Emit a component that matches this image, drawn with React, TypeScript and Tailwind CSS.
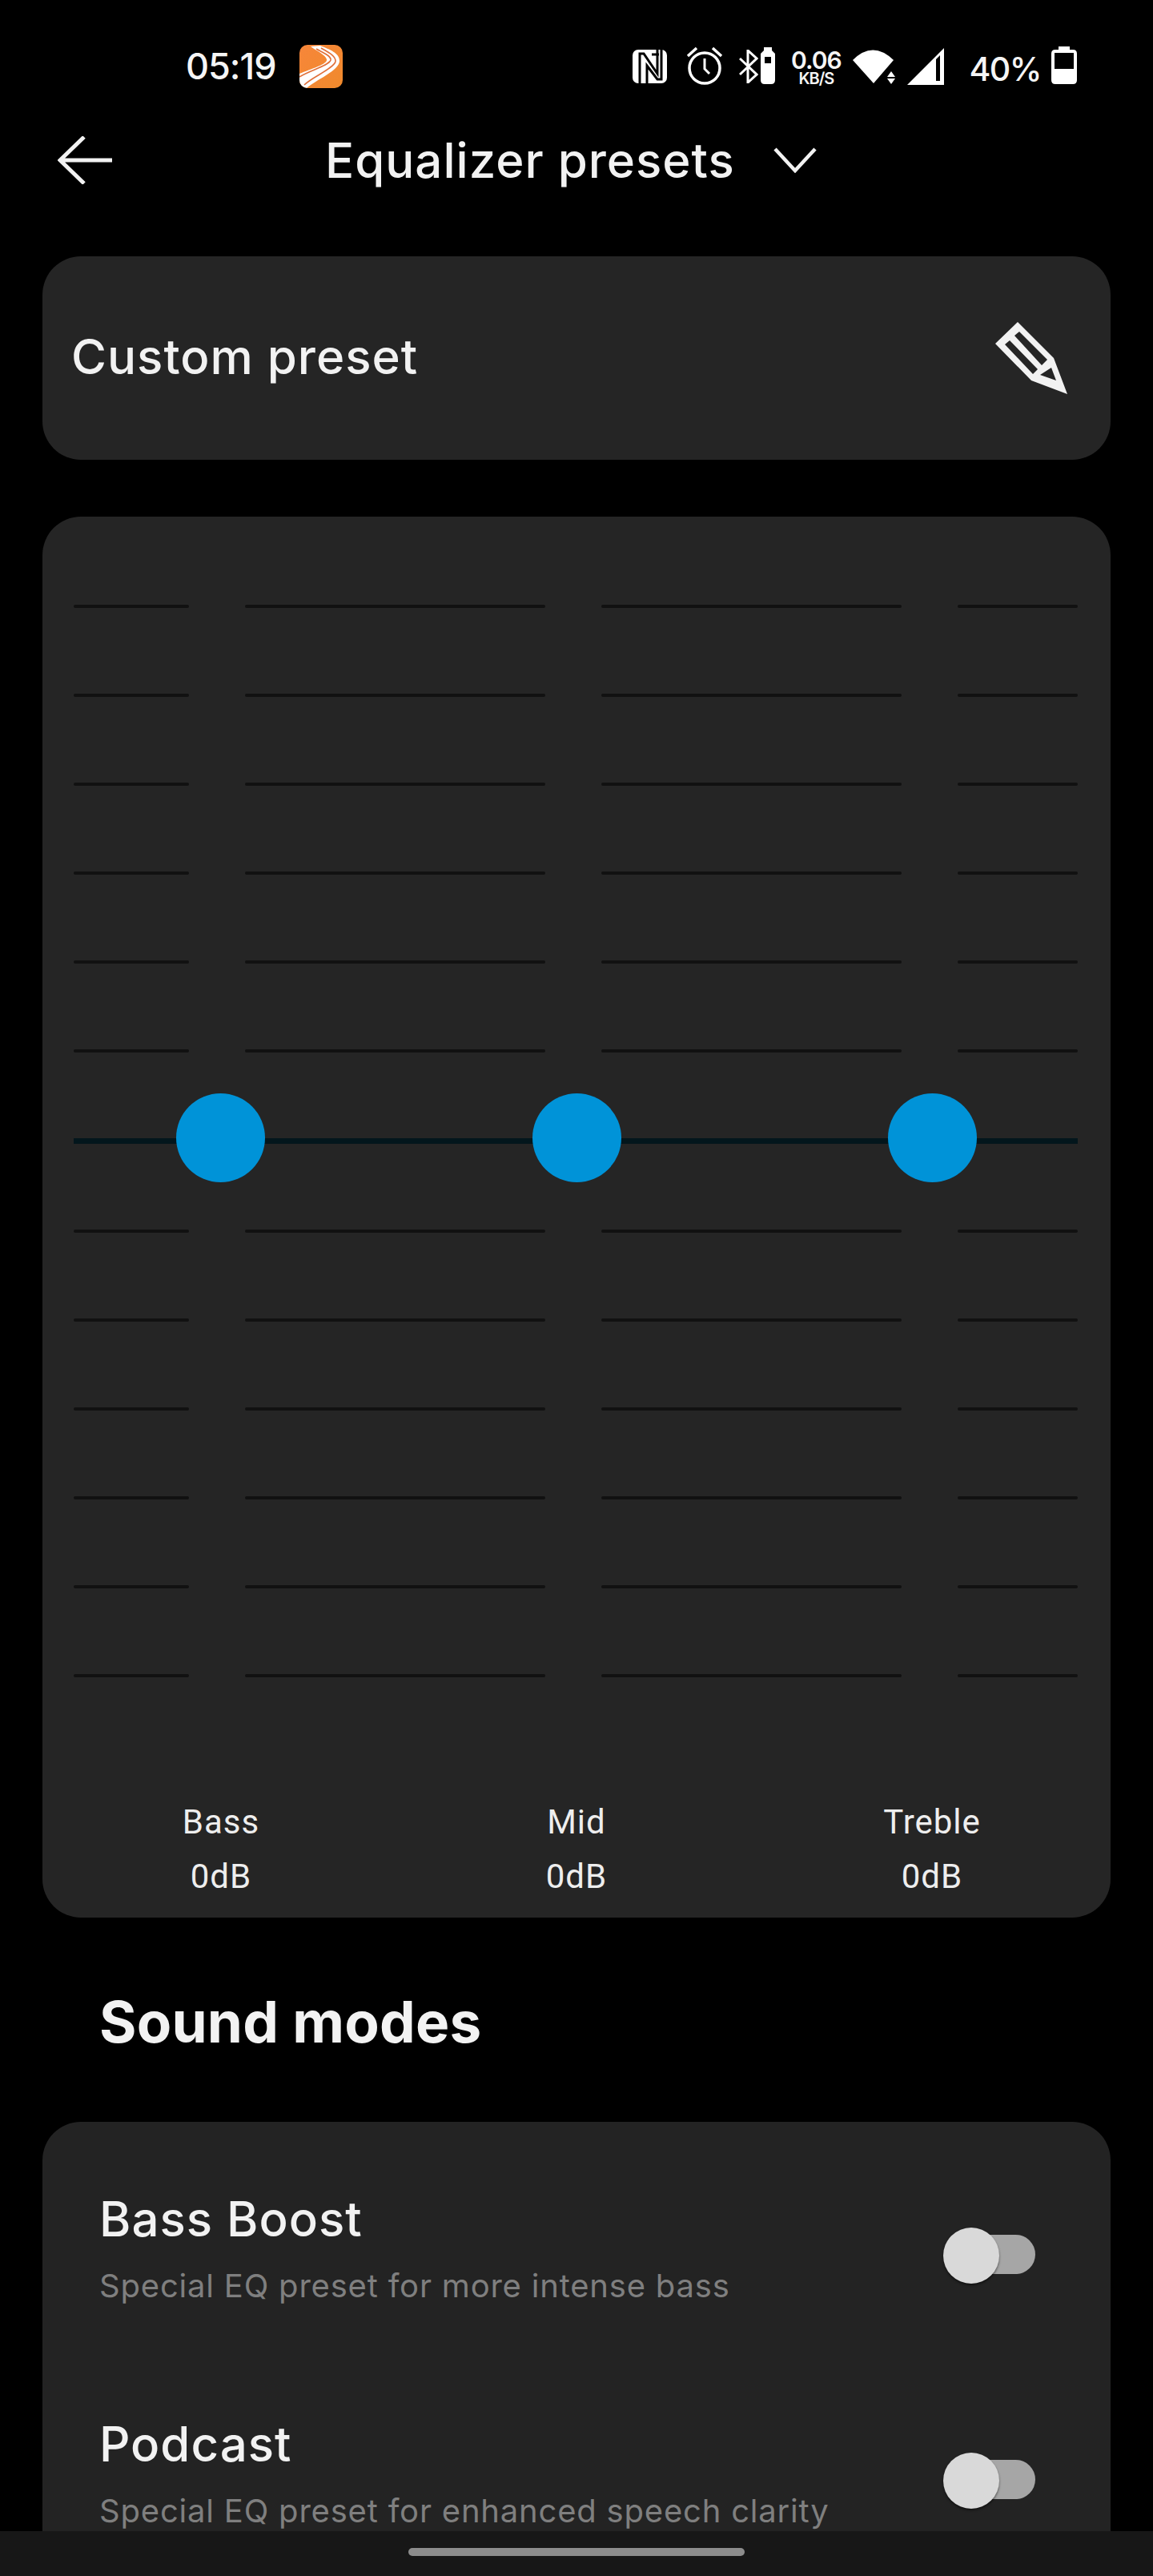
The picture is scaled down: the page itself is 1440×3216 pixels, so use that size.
const rows = Array.from({ length: 13 }, (_, i) => i);
const knobs = ['left-[167px]', 'left-[612px]', 'left-[1056px]'];

function StatusBar() {
  return (
    <div className="flex h-[165px] shrink-0 items-start pl-[232px] pt-[56px] pr-[95px] text-[#f5f5f5]">
      <span className="mt-[4px] text-[45px] leading-[46px] font-medium font-['Inter',sans-serif] tracking-[-1px]">05:19</span>
      <svg className="ml-[29px]" width="54" height="54" viewBox="0 0 54 54">
        <defs>
          <linearGradient id="appBg" x1="0" y1="0" x2="1" y2="1">
            <stop offset="0" stopColor="#f7863a" />
            <stop offset="1" stopColor="#f08a2c" />
          </linearGradient>
          <clipPath id="appClip">
            <rect width="54" height="54" rx="10" />
          </clipPath>
        </defs>
        <g clipPath="url(#appClip)">
          <rect width="54" height="54" fill="url(#appBg)" />
          <path d="M14 2 L26 1 C38 6 50 10 50 20 C50 32 20 44 9 54 L0 54 L0 36 C14 30 36 24 34 18 C32 12 22 8 14 2 Z" fill="#fff" />
          <path d="M21 5 C30 10 40 14 39 19 C37 26 12 32 0 40" fill="none" stroke="#e0703a" strokeWidth="1.6" />
          <path d="M27 4 C36 9 46 14 45 21 C42 30 16 40 6 50" fill="none" stroke="#e0703a" strokeWidth="1.6" />
        </g>
      </svg>
      <div className="ml-auto flex items-start">
        <svg className="mt-[6px]" width="43" height="42" viewBox="0 0 43 42">
          <rect width="43" height="42" rx="7" fill="#fff" />
          <path d="M9 42 V5 H14 L31 30 V0" fill="none" stroke="#000" strokeWidth="3" />
          <path d="M18 42 V20 L31 37 H36 V0" fill="none" stroke="#000" strokeWidth="3" />
          <path d="M24 6 H33" fill="none" stroke="#000" strokeWidth="3" />
        </svg>
        <svg className="ml-[24px]" width="46" height="50" viewBox="0 0 46 50" fill="none" stroke="#fff">
          <circle cx="23" cy="29" r="19" strokeWidth="3.5" />
          <path d="M23 17 V30 L29 36" strokeWidth="3" />
          <path d="M2 14 L13 4 M44 14 L33 4" strokeWidth="3.5" />
        </svg>
        <svg className="ml-[20px] mt-[6px]" width="24" height="42" viewBox="0 0 24 42" fill="none" stroke="#fff" strokeWidth="3">
          <path d="M1 11 L22 31 L11 41 V1 L22 11 L1 31" />
        </svg>
        <svg className="ml-[3px] mt-[3px]" width="18" height="46" viewBox="0 0 18 46">
          <path fillRule="evenodd" d="M4 0 H14 V4 L18 8 V41 Q18 46 13 46 H5 Q0 46 0 41 V8 L4 4 Z M5 12 V20 H13 V12 Z" fill="#fff" />
        </svg>
        <div className="ml-[20px] mt-[5px] flex w-[62px] flex-col items-center font-['Inter',sans-serif] font-semibold">
          <span className="text-[30px] leading-[28px] tracking-[-1px]">0.06</span>
          <span className="mt-[1px] text-[20px] leading-[17px] tracking-[-1px]">KB/S</span>
        </div>
        <svg className="ml-[15px] mt-[6px]" width="54" height="44" viewBox="0 0 54 44" fill="#fff">
          <path d="M0 13 Q25 -12 51 13 L26 42 Z" />
          <path d="M43 34 H53 L48 27 Z" />
          <path d="M43 36 H53 L48 43 Z" />
        </svg>
        <svg className="ml-[14px] mt-[4px]" width="46" height="47" viewBox="0 0 46 47">
          <path fillRule="evenodd" d="M0 46 L46 0 V46 Z M36 14 V41 H41 V9 Z" fill="#fff" />
        </svg>
        <span className="ml-[31px] mt-[8px] text-[41px] leading-[44px] font-medium font-['Inter',sans-serif] tracking-[-1.5px]">40%</span>
        <svg className="ml-[13px] mt-[2px]" width="32" height="47" viewBox="0 0 32 47">
          <path fillRule="evenodd" d="M9 0 H23 V4 H27 Q32 4 32 9 V42 Q32 47 27 47 H5 Q0 47 0 42 V9 Q0 4 5 4 H9 Z M4 8 V28 H28 V8 Z" fill="#fff" />
        </svg>
      </div>
    </div>
  );
}

function Header() {
  return (
    <div className="flex h-[70px] shrink-0 items-center text-[#f2f2f2]">
      <svg className="ml-[72px]" width="68" height="60" viewBox="0 0 68 60" fill="none" stroke="#f2f2f2" strokeWidth="5">
        <path d="M33 1 L3 30 L33 59 M3 30 H68" />
      </svg>
      <span className="ml-[266px] text-[60px] leading-[70px] font-medium font-['Inter',sans-serif] tracking-[1px]">Equalizer presets</span>
      <svg className="ml-[48px]" width="54" height="32" viewBox="0 0 54 32" fill="none" stroke="#f2f2f2" strokeWidth="4.5">
        <path d="M2 2 L27 29 L52 2" />
      </svg>
    </div>
  );
}

function Pencil() {
  return (
    <svg width="90" height="90" viewBox="0 0 90 90">
      <path
        fillRule="evenodd"
        fill="#f2f2f2"
        d="M28 0 L0 27 L45 73 L90 90 L73 45 Z M24 17 L30 12 L65 47 L58 54 Z M12 28 L18 23 L53 59 L47 65 Z M56 66 L70 57 L76 73 Z"
      />
    </svg>
  );
}

function Equalizer() {
  return (
    <div className="relative mt-[71px] h-[1749px] rounded-[48px] bg-[#252525] px-[39px] pt-[110px]">
      <div className="flex h-[1339px] flex-col justify-between">
        {rows.map((i) =>
          i === 6 ? (
            <div key={i} className="h-[7px] w-[1254px] bg-[#03161c]" />
          ) : (
            <div key={i} className="flex h-[4px] gap-[70px]">
              <div className="w-[144px] rounded-full bg-[#111111]" />
              <div className="w-[375px] rounded-full bg-[#111111]" />
              <div className="w-[375px] rounded-full bg-[#111111]" />
              <div className="w-[150px] rounded-full bg-[#111111]" />
            </div>
          ),
        )}
      </div>
      {knobs.map((k) => (
        <div key={k} className={`absolute top-[720px] h-[111px] w-[111px] rounded-full bg-[#0093d8] ${k}`} />
      ))}
      <div className="mt-[147px] flex font-['Roboto',sans-serif] text-[42px] leading-[68px] tracking-[1px] text-[#eeeeee]">
        <div className="ml-[-38px] w-[444px] shrink-0 text-center">
          <p>Bass</p>
          <p>0dB</p>
        </div>
        <div className="w-[444px] shrink-0 text-center">
          <p>Mid</p>
          <p>0dB</p>
        </div>
        <div className="w-[444px] shrink-0 text-center">
          <p>Treble</p>
          <p>0dB</p>
        </div>
      </div>
    </div>
  );
}

function ModeRow({ title, desc }: { title: string; desc: string }) {
  return (
    <div className="flex h-[281px] shrink-0 justify-between pl-[71px] pr-[94px]">
      <div>
        <p className="text-[60px] leading-[70px] font-medium font-['Inter',sans-serif] tracking-[1px] text-[#f2f2f2]">{title}</p>
        <p className="mt-[24px] text-[40px] leading-[50px] font-['Inter',sans-serif] tracking-[0.8px] text-[#7f7f7f]">{desc}</p>
      </div>
      <div className="relative mt-[46px] h-[70px] w-[115px]">
        <div className="absolute right-0 top-[9px] h-[49px] w-[90px] rounded-full bg-[#a6a6a6]" />
        <div className="absolute left-0 top-0 h-[70px] w-[70px] rounded-full bg-[#d9d9d9] shadow-[0_2px_3px_rgba(0,0,0,0.5)]" />
      </div>
    </div>
  );
}

export default function App() {
  return (
    <div className="flex h-[3216px] w-[1440px] flex-col overflow-hidden bg-black">
      <StatusBar />
      <Header />
      <div className="min-h-0 flex-1 overflow-hidden px-[53px]">
        <div className="mt-[85px] flex h-[254px] items-center justify-between rounded-[48px] bg-[#252525] pl-[36px] pr-[54px]">
          <span className="mb-[4px] text-[60px] font-medium font-['Inter',sans-serif] tracking-[1px] text-[#f2f2f2]">Custom preset</span>
          <Pencil />
        </div>
        <Equalizer />
        <h2 className="ml-[71px] mt-[85px] text-[71px] leading-[90px] font-bold font-['Inter',sans-serif] tracking-[0.2px] text-[#f2f2f2]">Sound modes</h2>
        <div className="mt-[80px] flex h-[600px] flex-col rounded-[48px] bg-[#232323] pt-[86px]">
          <ModeRow title="Bass Boost" desc="Special EQ preset for more intense bass" />
          <ModeRow title="Podcast" desc="Special EQ preset for enhanced speech clarity" />
        </div>
      </div>
      <div className="flex h-[56px] shrink-0 items-start justify-center bg-[#171717] pt-[21px]">
        <div className="h-[10px] w-[420px] rounded-full bg-[#8c8c8c]" />
      </div>
    </div>
  );
}
